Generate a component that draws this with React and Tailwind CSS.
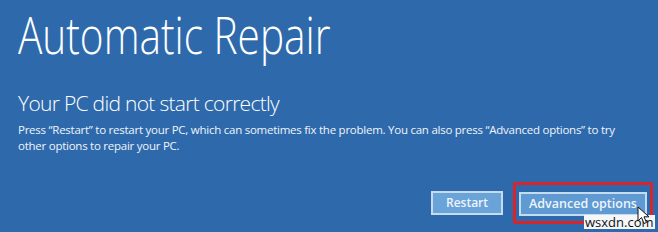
import React from 'react';

function Cursor() {
    return (
        <svg width="14" height="20" viewBox="0 0 14 20" className="absolute left-[637px] top-[206px]">
            <path d="M1 1 L1 15 L4.5 11.5 L7 17.5 L9.5 16.5 L7 10.8 L12 10.8 Z" fill="#ffffff" stroke="#111111" strokeWidth="1" strokeLinejoin="round" />
        </svg>
    );
}

export default function App() {
    return (
        <div
            className="relative w-[658px] h-[232px] overflow-hidden bg-[#2e6aab] text-white"
            style={{ fontFamily: '"Open Sans", "Noto Sans", sans-serif' }}
        >
            <div className="flex flex-col items-stretch pl-[18px]">
                <div className="h-[62px] mt-[3px]">
                    <h1 className="inline-block text-[52px] leading-[62px] font-light whitespace-nowrap origin-left scale-x-[0.78]">
                        Automatic Repair
                    </h1>
                </div>
                <h2 className="mt-[24px] pr-[20px] text-[21px] leading-[28px] font-light tracking-[-0.7px]">
                    Your PC did not start correctly
                </h2>
                <p className="mt-[5px] pr-[20px] text-[11.5px] leading-[16px] tracking-[-0.25px] text-[#eef4fb]">
                    Press “Restart” to restart your PC, which can sometimes fix the problem. You can also press “Advanced options” to try other options to repair your PC.
                </p>
                <div className="mt-[28px] flex items-start justify-end gap-[10px] pr-[5px]">
                    <button className="mt-[9px] w-[72px] h-[24px] border-2 border-[#c4dbf0] bg-[#6aa3d8] text-[12px] font-semibold text-[#eef4fb]">
                        Restart
                    </button>
                    <div className="border-[3px] border-[#d8242b] rounded-[2px] px-[3px] pt-[5px] pb-[5px]">
                        <button className="w-[128px] h-[24px] border-2 border-[#c4dbf0] bg-[#5f9ad3] text-[12.5px] font-semibold text-[#eef4fb]">
                            Advanced options
                        </button>
                    </div>
                </div>
            </div>
            <div className="absolute left-[584px] top-[215px] bg-[#f4f6f8] px-[1px] text-[13px] leading-[14px] text-[#111111]">
                wsxdn.com
            </div>
            <Cursor />
        </div>
    );
}
